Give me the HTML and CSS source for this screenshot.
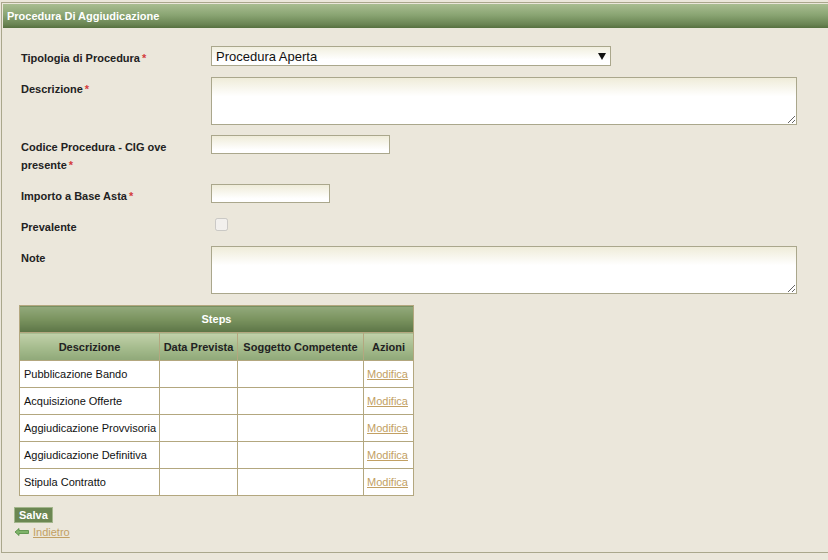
FILE: index.html
```html
<!DOCTYPE html>
<html lang="it">
<head>
<meta charset="utf-8">
<title>Procedura Di Aggiudicazione</title>
<link rel="stylesheet" href="styles.css">
</head>
<body>
<div class="panel">
  <div class="panel-header">Procedura Di Aggiudicazione</div>
  <div class="panel-body">
    <div class="form">
      <div class="row">
        <label class="lbl">Tipologia di Procedura<span class="req">*</span></label>
        <div class="field">
          <div class="select-wrap">
            <select class="select"><option>Procedura Aperta</option></select>
          </div>
        </div>
      </div>
      <div class="row">
        <label class="lbl">Descrizione<span class="req">*</span></label>
        <div class="field"><textarea class="area"></textarea></div>
      </div>
      <div class="row">
        <label class="lbl"><span>Codice Procedura - CIG ove</span><br><span>presente</span><span class="req">*</span></label>
        <div class="field"><input class="inp inp-cig" type="text"></div>
      </div>
      <div class="row">
        <label class="lbl">Importo a Base Asta<span class="req">*</span></label>
        <div class="field"><input class="inp inp-imp" type="text"></div>
      </div>
      <div class="row">
        <label class="lbl">Prevalente</label>
        <div class="field"><input class="chk" type="checkbox" disabled></div>
      </div>
      <div class="row">
        <label class="lbl">Note</label>
        <div class="field"><textarea class="area"></textarea></div>
      </div>
    </div>

    <table class="steps">
      <colgroup>
        <col class="c1"><col class="c2"><col class="c3"><col class="c4">
      </colgroup>
      <thead>
        <tr><th class="steps-title" colspan="4">Steps</th></tr>
        <tr class="cols">
          <th>Descrizione</th>
          <th>Data Prevista</th>
          <th>Soggetto Competente</th>
          <th>Azioni</th>
        </tr>
      </thead>
      <tbody>
        <tr><td>Pubblicazione Bando</td><td></td><td></td><td><a href="#" class="link">Modifica</a></td></tr>
        <tr><td>Acquisizione Offerte</td><td></td><td></td><td><a href="#" class="link">Modifica</a></td></tr>
        <tr><td>Aggiudicazione Provvisoria</td><td></td><td></td><td><a href="#" class="link">Modifica</a></td></tr>
        <tr><td>Aggiudicazione Definitiva</td><td></td><td></td><td><a href="#" class="link">Modifica</a></td></tr>
        <tr><td>Stipula Contratto</td><td></td><td></td><td><a href="#" class="link">Modifica</a></td></tr>
      </tbody>
    </table>

    <div class="actions">
      <button class="btn" type="button">Salva</button>
      <div class="back">
        <svg class="back-icon" width="14" height="8" viewBox="0 0 14 8">
          <path d="M0 4 L4 0.5 L4 2.5 L13.5 2.5 L13.5 5.5 L4 5.5 L4 7.5 Z" fill="#7fb36a" stroke="#4f8a3e" stroke-width="0.8"/>
        </svg>
        <a href="#" class="link">Indietro</a>
      </div>
    </div>
  </div>
</div>
</body>
</html>
```
FILE: styles.css
```css
html, body {
  margin: 0;
  padding: 0;
}
body {
  background: #ebe7db;
  font-family: "Liberation Sans", Arial, sans-serif;
  font-size: 11px;
  color: #222;
}
.panel {
  margin: 2px 0 0 1px;
  border: 1px solid #aaa78c;
  border-right: none;
  padding: 1px 0 0 1px;
  box-sizing: border-box;
  height: 551px;
}
.panel-header {
  height: 24px;
  line-height: 24px;
  padding-left: 4px;
  color: #fff;
  font-weight: bold;
  font-size: 11px;
  background: linear-gradient(#a9bd91, #8aa573 45%, #6a8453 85%, #56703f);
}
.panel-body {
  padding: 18px 0 0 17px;
}
.form {
  display: flex;
  flex-direction: column;
  gap: 10px;
}
.row {
  display: grid;
  grid-template-columns: 191px 1fr;
  align-items: start;
}
.lbl {
  padding: 3px 0 0 1px;
  line-height: 18px;
  font-weight: bold;
  color: #222;
  width: 150px;
}
.req {
  color: #d43c3c;
  padding-left: 2px;
}
.field {
  display: flex;
}
.select-wrap {
  position: relative;
  width: 400px;
}
.select-wrap::after {
  content: "";
  position: absolute;
  right: 5px;
  top: 7px;
  border-left: 4px solid transparent;
  border-right: 4px solid transparent;
  border-top: 7px solid #111;
  pointer-events: none;
}
.select {
  appearance: none;
  -webkit-appearance: none;
  width: 400px;
  height: 20px;
  margin: 0;
  padding: 0 0 0 4px;
  border: 1px solid #aaa78c;
  border-radius: 0;
  background: linear-gradient(#f1efdf, #ffffff 70%);
  font-family: "Liberation Sans", Arial, sans-serif;
  font-size: 13px;
  color: #111;
  box-sizing: border-box;
}
.area {
  width: 586px;
  height: 48px;
  margin: 0;
  padding: 2px;
  border: 1px solid #aaa78c;
  background: linear-gradient(#efecd9, #ffffff 40%);
  box-sizing: border-box;
  font-family: "Liberation Sans", Arial, sans-serif;
  font-size: 12px;
}
.inp {
  height: 19px;
  margin: 0;
  padding: 0 3px;
  border: 1px solid #aaa78c;
  background: linear-gradient(#efecd9, #ffffff 80%);
  box-sizing: border-box;
}
.inp-cig { width: 179px; }
.inp-imp { width: 119px; }
.chk {
  width: 13px;
  height: 13px;
  margin: 3px 0 0 4px;
}
.steps {
  margin: 11px 0 0 -1px;
  border-collapse: collapse;
  table-layout: fixed;
  width: 394px;
  border: 1px solid #b3a77f;
  background: #fff;
  font-size: 11px;
}
.c1 { width: 140px; }
.c2 { width: 78px; }
.c3 { width: 126px; }
.c4 { width: 50px; }
.steps th, .steps td {
  border: 1px solid #b3a77f;
  padding: 0 4px;
  box-sizing: border-box;
  overflow: visible;
}
.steps-title {
  height: 27px;
  color: #fff;
  font-weight: bold;
  text-align: center;
  background: linear-gradient(#93aa7c, #7a935f 50%, #5c7546);
}
.cols th {
  height: 28px;
  padding: 0 2px;
  font-weight: bold;
  color: #222;
  text-align: center;
  background: linear-gradient(#c1d1aa, #a7bd8f 50%, #8fa878);
  white-space: nowrap;
}
.steps td {
  height: 27px;
  white-space: nowrap;
  color: #111;
}
.steps td:last-child {
  padding: 0 3px;
}
.link {
  color: #c2a063;
  text-decoration: underline;
}
.actions {
  margin: 11px 0 0 -6px;
  display: flex;
  flex-direction: column;
  align-items: flex-start;
}
.btn {
  display: block;
  height: 16px;
  padding: 0 4px;
  margin: 0;
  border: 1px solid #a3b68c;
  background: #6b8752;
  color: #fff;
  font-family: "Liberation Sans", Arial, sans-serif;
  font-size: 11px;
  font-weight: bold;
  line-height: 14px;
}
.back {
  display: flex;
  align-items: center;
  gap: 4px;
  margin: 2px 0 0 1px;
  height: 14px;
}
.back-icon {
  display: block;
}
```
